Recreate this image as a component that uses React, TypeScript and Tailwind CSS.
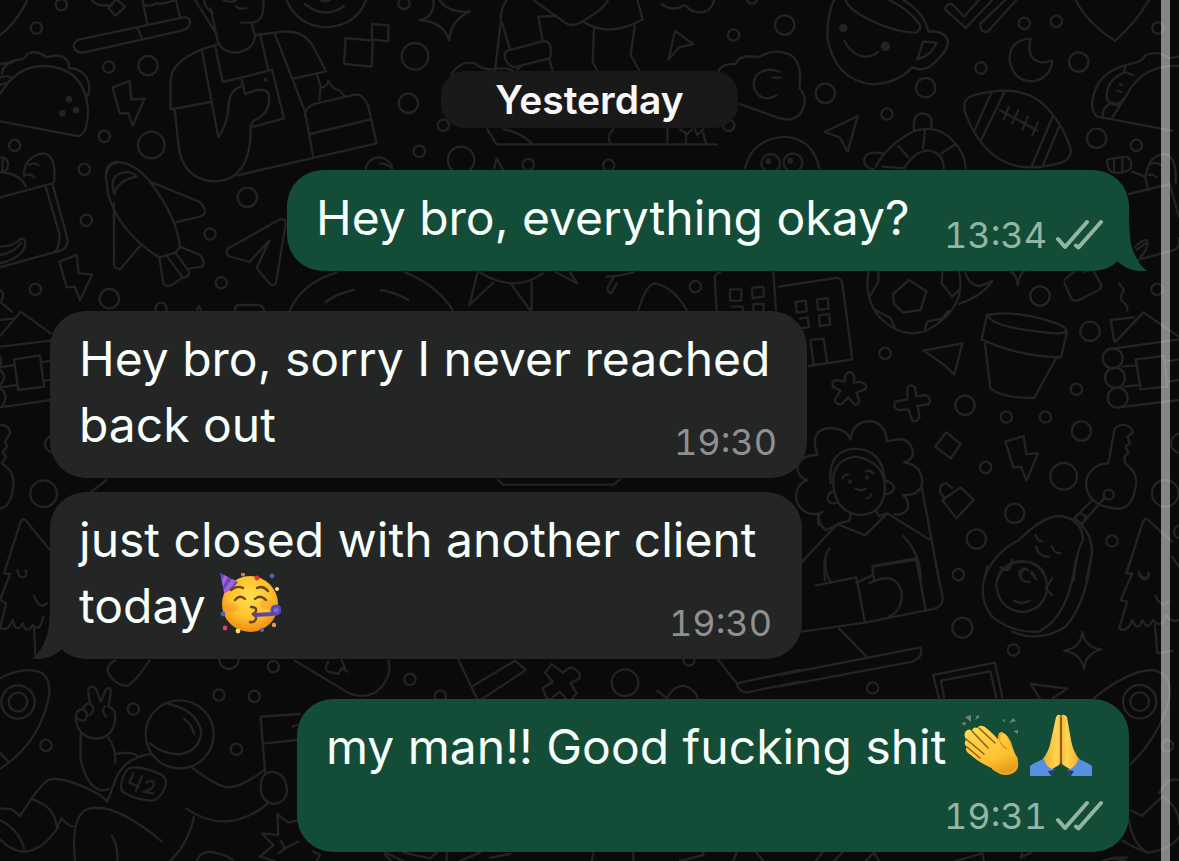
import type { ReactNode } from "react";
import { clsx } from "clsx";

type Dot = [x: number, y: number, r: number];

const circles: Dot[] = [
  [184, 14, 17], [109, 84, 17], [326, 201, 17], [444, 197, 29], [313, 409, 17],
  [44, 436, 17], [454, 435, 40], [253, 508, 17], [259, 661, 17], [742, 592, 29],
  [630, 702, 17], [664, 848, 17], [106, 868, 17], [328, 896, 29], [483, 925, 17],
  [1212, 10, 17], [1245, 169, 40], [1225, 310, 29], [1330, 376, 17], [1258, 454, 17],
  [1383, 480, 40], [1585, 494, 17], [1826, 496, 17], [2201, 105, 17], [2186, 376, 17],
  [2086, 860, 17], [2256, -6, 17], [2312, 490, 28], [2379, 488, 28], [1137, 512, 40],
  [2354, 75, 29], [3073, 70, 17], [3169, 64, 17], [3474, 84, 17], [2943, 204, 17],
  [3236, 186, 29], [2476, 280, 29], [2777, 263, 29], [2661, 342, 17], [3290, 415, 29],
  [3409, 436, 17], [3120, 888, 29], [3471, 868, 17],
  [2655, 1060, 17], [3270, 994, 29], [3229, 1168, 17], [2895, 1216, 29], [3019, 1251, 17],
  [3136, 1251, 17], [3244, 1293, 29], [2957, 1402, 17], [3191, 1429, 40], [3044, 1540, 29],
  [2929, 1617, 29], [3336, 1623, 17], [2875, 1724, 17], [3496, 1480, 40], [3542, 1330, 29],
  [3542, 1595, 20], [3338, 1075, 30], [3345, 1133, 30], [3353, 1193, 30],
  [2887, 1883, 30], [3040, 1950, 17], [2618, 2064, 17], [3419, 2105, 50], [3419, 2105, 28],
  [3502, 2237, 17], [54, 2106, 50], [54, 2106, 28], [400, 2127, 17], [657, 2085, 17],
  [763, 2089, 17], [138, 2236, 17], [709, 2248, 17], [820, 2000, 17], [687, 1978, 29],
  [1230, 2038, 17], [1321, 2088, 17], [1875, 2048, 40], [2067, 1980, 17],
  [131, 1481, 40], [160, 1332, 25], [3326, 1484, 15],
];

const dots: Dot[] = [
  [207, 298, 10], [187, 340, 10], [228, 331, 10], [797, 239, 6],
  [2530, 84, 13], [2656, 139, 14], [2305, 484, 9], [2370, 482, 9],
  [2550, 1445, 6], [2601, 1433, 6],
];

function Wallpaper() {
  return (
    <svg
      aria-hidden="true"
      viewBox="0 0 3537 2583"
      preserveAspectRatio="xMinYMin slice"
      className="absolute inset-0 size-full"
      fill="none"
      stroke="#232323"
      strokeWidth={7}
      strokeLinecap="round"
      strokeLinejoin="round"
    >
      {circles.map(([x, y, r]) => (
        <circle key={`${x}-${y}-${r}`} cx={x} cy={y} r={r} />
      ))}
      {dots.map(([x, y, r]) => (
        <circle key={`${x}-${y}`} cx={x} cy={y} r={r} fill="#232323" stroke="none" />
      ))}
      {/* top left: taco, bolts, barista, cake */}
      <g>
        <path d="M0 105 Q45 75 82 0" />
        <path d="M275 0 Q295 22 325 15 M348 -2 L376 20 L346 47 L326 25 Z" />
        <path d="M240 118 L550 52 Q572 50 570 70 Q566 86 545 92 L250 158 Q225 158 221 138 Q222 122 240 118 Z M412 84 L428 120 M428 0 L441 70 M436 15 Q455 20 470 10 Q490 14 528 0 L539 48" />
        <path d="M0 282 Q50 198 128 198 Q255 200 264 330 Q262 410 232 408 L0 364" />
        <path d="M5 220 Q10 190 50 180 Q75 180 82 162 Q110 148 140 172 Q180 158 200 180 Q210 195 206 204 M0 192 Q20 190 40 186 M0 232 Q20 225 32 232 M0 255 L20 248 M206 204 Q262 208 268 260 Q268 280 258 296" />
        <path d="M337 263 L389 243 L394 299 L434 295 L398 377 L385 339 L360 340 Z" />
        <path d="M178 785 L230 765 L236 820 L277 823 L240 901 L224 860 L200 862 Z" />
        <path d="M585 0 L648 100 M632 25 L652 120 Q665 158 710 158 Q760 150 765 110 L755 68 Q795 65 790 0 M612 0 Q615 25 638 38 M708 20 Q718 30 738 24 M722 68 H748 M670 0 Q695 10 710 0" />
        <path d="M652 133 L606 148 Q515 185 512 240 V328 L632 306 M606 152 L655 412 Q685 370 686 310 Q690 270 725 258 M646 140 L668 246 L724 233 L735 282 Q800 255 806 285 Q815 340 760 362 L752 378 Q755 540 645 544 Q545 540 535 430 L524 328" />
        <path d="M724 233 L816 209 L852 355 L760 380 M766 105 L850 95 Q910 90 940 140 L978 214 L880 236 M782 110 L804 205 M824 100 L915 335 L940 472 M712 526 L1130 430 L1105 320 Q1090 280 1065 284 L950 310 Q915 318 915 348 M930 402 L1112 358 M950 222 L962 258 L958 300 M962 262 Q982 262 985 242 Q995 265 1018 272 L1034 288" />
        <path d="M860 0 Q890 75 975 82 Q1070 78 1098 0 M915 12 Q975 60 1032 18 M962 0 Q975 8 990 0" />
        <path d="M1037 114 L1118 122 L1115 200 L1032 192 Z M1116 72 L1166 76 L1164 124 L1116 118 Z" />
      </g>
      {/* left: pocket, rocket plane, paper plane */}
      <g>
        <path d="M0 592 L157 550 L202 715 Q205 745 180 752 L0 802 M136 556 L178 700 Q180 740 165 755 M0 516 Q60 520 78 560 M72 530 Q70 470 130 460 Q170 465 162 545 M88 495 Q105 485 116 496 M78 525 Q90 520 103 532 M0 472 Q18 468 24 490 Q25 510 10 516 M8 475 V512 M0 740 Q40 740 60 718 Q78 712 76 735 Q65 775 0 790 M0 765 Q40 760 64 728" />
        <path d="M318 535 Q315 488 350 486 Q405 488 450 545 Q530 650 540 740 L526 758 L478 772 Q360 700 325 585 Z M320 520 Q325 490 350 490 M343 582 Q325 530 368 518 Q395 512 410 530 Q355 540 343 582 M450 545 L600 606 Q630 640 600 650 L522 668 M342 610 V795 Q345 808 362 806 L420 738 M478 772 L490 850 Q500 866 520 852 L548 832 L502 770 M526 758 L568 815 Q565 835 548 832 M540 740 L600 765 Q615 780 608 800 L568 806" />
        <path d="M685 745 L840 658 Q858 655 857 672 L828 850 Q820 860 810 852 L770 804 L808 722 L748 786 L685 768 Q675 758 685 745 Z" />
        <path d="M870 930 Q905 850 1010 817 M978 906 Q1010 880 1062 870 M1142 870 Q1180 875 1225 900 M705 930 Q705 915 720 915 H770 Q790 915 792 930 M590 930 L597 918 L602 930 M1215 817 Q1310 855 1358 930 M0 870 Q15 880 5 900 M0 905 Q20 920 35 935" />
        <path d="M0 960 L42 955 M0 1008 L62 935 L152 1000 M0 1040 L152 1022 M42 1078 L120 1066 L132 1160 L55 1170 Z M0 1102 L42 1095 M0 1162 L50 1155 M122 1088 L152 1082 M135 1142 L152 1140 M0 1222 L152 1200 M0 1070 Q8 1085 0 1100 M0 1110 Q25 1130 0 1155 M0 1165 Q30 1185 5 1220" />
        <path d="M0 1275 Q30 1275 30 1300 L15 1325 L22 1340 L8 1355 L18 1372 L5 1390 Q45 1415 40 1455 Q35 1520 0 1526" />
        <path d="M150 1650 L78 1562 Q70 1552 62 1565 L12 1720 L30 1722 L0 1800 L18 1810 L0 1885 Q25 1895 38 1860 Q50 1905 68 1870 Q80 1905 98 1875 Q120 1900 130 1850 M52 1710 Q58 1735 70 1732 Q82 1730 78 1712 M102 1788 Q120 1830 140 1810 M102 1885 L106 1965 M270 1478 L320 1440" />
      </g>
      {/* top centre: sparkle, person at desk, clouds */}
      <g transform="translate(1140 0)">
        <path d="M120 60 Q165 50 160 0 M178 0 Q205 40 270 34 Q210 62 208 122 Q190 65 120 60" />
        <path d="M380 0 Q360 25 362 70 L345 210 M366 66 L390 150 M382 152 L488 124 Q508 122 512 142 Q515 172 505 176 L400 202 Q375 190 374 165 Q374 155 382 152 Z M488 124 L475 50 L530 48 M412 208 L422 200 M508 178 L517 212" />
        <path d="M460 0 L555 68 Q575 82 600 68 Q670 30 684 0 M610 65 Q690 115 788 58 L772 0 M642 84 L638 185 L652 212 M764 78 L752 165 L778 212" />
        <path d="M215 222 Q240 180 285 190 Q305 210 340 208 Q385 200 402 215 M322 388 L350 433 H1010 M370 388 Q420 395 455 430 M700 388 Q680 405 690 430 M862 385 V430 M918 400 V430 M900 388 L922 402 L936 388 M945 388 L952 405 L970 388 M970 400 L978 430 M342 505 L350 475 L368 508" />
        <path d="M845 12 Q870 32 900 22 L915 15 Q945 50 985 30 Q1000 15 1002 0 M885 93 L940 132 L898 142 L866 178 Z" />
        <path d="M1015 215 Q1025 190 1066 192 Q1080 160 1135 172 Q1180 145 1220 160 Q1270 175 1258 265 Q1290 300 1258 345 Q1230 365 1205 355 M1080 312 L1200 356 M1197 215 Q1160 200 1130 225 Q1110 255 1135 285 Q1160 305 1190 285 M1178 233 H1202" />
        <path d="M1095 505 Q1115 415 1218 410 Q1300 420 1318 505 M0 490 Q20 490 35 505" />
        <path d="M293 817 L268 915 L340 848 M300 817 Q350 850 405 850 Q450 848 488 820 M392 850 L450 930 M455 845 V930 M528 817 L592 850 L570 817 M680 830 Q705 830 760 817 M700 832 L682 865 Q682 880 695 878 L710 850 M775 930 Q800 850 825 850 Q880 860 920 930 M1010 930 L1004 830 Q1008 820 1020 817 M1180 817 L1188 930 M1050 868 H1084 V902 H1050 Z M1116 864 L1150 860 L1152 890 L1118 894 Z M1056 920 H1088 V950 M1120 930 V912 H1150 V940" />
      </g>
      {/* top right: mug, ticks, moon, football, ring */}
      <g transform="translate(2337 0)">
        <path d="M165 0 Q145 40 145 110 Q165 240 280 253 Q355 250 400 202 M400 202 Q440 220 475 180 Q525 130 495 105 Q480 92 448 95 Q435 35 372 0 M200 0 Q205 20 245 45 Q340 98 412 98 Q430 85 420 70 Q385 25 330 0 M196 122 Q220 168 260 170 Q285 168 297 155 M432 125 L472 128 Q460 165 415 178 Z" />
        <path d="M498 28 Q505 5 522 15 L555 50 L600 0 M498 28 L560 84 L640 0 M700 -20 L605 70 Q600 95 625 96 L712 0 M890 0 Q925 70 1008 122 Q1070 70 1110 0" />
        <path d="M755 116 Q690 120 692 180 Q700 242 760 244 Q815 235 820 182 Q780 195 762 175 Q745 155 755 116 Z" />
        <path d="M556 310 Q565 288 590 284 Q720 250 790 310 Q850 365 876 450 Q875 485 830 492 Q720 520 650 470 Q585 420 556 330 Z M636 280 L588 388 M675 278 L604 425 M822 348 L758 498 M840 380 L792 496 M662 330 L776 392 M690 320 L674 358 M718 330 L700 370 M746 350 L730 390 M776 368 L760 405" />
        <path d="M137 396 L236 348 L206 455 L182 412 Z M405 390 Q400 340 432 340 Q465 345 456 382 M290 500 Q320 440 400 395 Q470 370 520 420 Q560 460 560 508 M375 505 Q410 450 450 452 Q495 460 494 508 M438 388 L432 445 M358 438 L388 472 M530 432 L488 460 M310 500 L375 505 M310 460 Q255 450 255 485 Q260 505 285 508" />
        <path d="M1179 392 L955 350 Q930 330 945 280 Q965 210 1060 190 Q1090 185 1100 165 Q1140 150 1170 175 L1200 170 M1200 198 Q1090 190 1040 290 L1000 352 M1040 195 L1035 215 L1062 225 M1040 290 Q1010 330 985 300 Q975 245 1035 218 M972 348 Q965 325 1000 308 L1020 318 M1022 252 L1030 256 M1015 272 L1028 276" />
        <path d="M985 490 Q980 475 1000 475 L1045 470 Q1060 480 1055 505 Q1040 520 1005 518 Q988 515 985 490 Z M1005 478 V515 M1030 474 V512 M1060 515 L1098 530 L1108 570 M1050 582 L1172 552 L1200 650 M1100 530 Q1110 462 1160 462 Q1195 475 1190 550 M1118 492 Q1130 485 1145 495 M1110 525 Q1120 520 1132 532 M1055 785 L1180 752 Q1205 745 1200 715 M1068 740 Q1105 710 1105 725 Q1108 745 1085 770 M1072 750 L1100 730" />
      </g>
      {/* right: building, ball, plant pot, woman, key */}
      <g transform="translate(2337 810)">
        <path d="M0 50 L170 24 Q188 22 190 42 L220 268 L90 288 M50 96 L80 92 L83 124 L53 128 Z M114 88 L146 84 L149 116 L117 120 Z M120 136 L150 132 L154 164 L122 168 Z M62 146 L86 142 L90 172 L70 174 M94 210 L134 206 L145 280 L104 285 Z" />
        <path d="M268 6 Q255 95 310 150 Q400 230 490 150 Q560 90 540 6 M298 6 V35 L275 75 M490 6 L488 40 L520 80 L540 60 M342 72 L390 30 L442 64 L425 120 L372 128 L345 100 Z M290 120 L335 145 L348 175 M435 185 L445 155 L490 145 L508 122 M558 6 Q570 45 600 48 Q620 45 640 32 Q615 75 540 102 M695 6 Q712 10 716 46 Q722 10 735 4" />
        <path d="M856 30 L872 15 L885 6 M856 40 L878 88 Q885 95 900 90 L960 60 Q970 50 965 40 L945 6 M915 6 L930 0 M1020 40 L1035 60 Q1020 80 1030 95 Q1048 105 1045 122" />
        <path d="M624 135 Q700 120 800 150 Q860 165 864 185 Q840 195 780 185 Q640 170 624 135 L608 208 Q720 260 846 262 L864 185 M618 220 L634 355 Q670 385 765 384 L832 264 M434 242 L550 220 L526 314 L500 288 Z" />
        <path d="M1010 215 L1093 127 L1200 200 M995 150 L1065 142 M995 150 L1006 215 M995 237 L1200 208 M1070 268 L1155 258 L1165 350 L1085 358 Z M1030 290 L1072 286 M1035 350 L1085 345 M1160 275 L1200 268 M1165 335 L1200 330 M1020 412 L1200 390" />
        <path d="M198 335 V318 Q212 295 226 318 L224 338 L245 336 Q270 345 258 358 L232 368 L240 390 Q240 408 225 402 L208 382 L188 402 Q168 405 168 388 L185 362 L162 350 Q155 332 172 330 Z" />
        <path d="M385 352 Q395 340 408 352 L412 380 L440 375 Q458 385 450 402 L415 408 L422 440 Q415 458 400 452 L388 418 L358 420 Q340 412 348 395 L385 388 Z" />
        <path d="M502 487 L545 522 L515 565 L468 530 Z M679 515 L734 498 L742 552 L777 550 L742 632 L726 590 L703 592 Z M490 690 L545 652 L584 690 L532 745 Z M484 668 Q480 640 502 640 L520 655 M484 668 L498 685" />
        <path d="M115 555 Q90 480 150 474 Q200 475 215 508 Q220 455 275 453 Q320 460 324 515 Q395 490 402 550 Q400 570 375 577 Q430 585 430 640 Q420 680 372 675 Q390 690 387 715 Q370 740 345 732 M115 555 Q60 555 55 595 Q60 625 85 630 Q45 645 53 695 Q75 740 118 730 Q115 760 140 780 L165 770 M130 725 Q110 740 120 765" />
        <path d="M155 640 Q145 540 230 536 Q315 540 318 640 M165 660 Q150 570 230 560 Q320 575 318 660 Q310 735 240 735 Q175 725 165 660 M160 665 Q145 670 146 688 Q155 705 175 698 M322 632 Q345 640 345 655 Q340 672 322 672 M190 625 Q195 612 208 614 M262 604 Q275 598 284 612 M230 656 Q245 665 260 656 M262 685 Q275 685 276 672" />
        <path d="M215 730 L212 752 L175 762 L70 875 M290 722 L300 738 L325 730 L450 808 M175 762 L258 796 L325 730 M428 650 L480 930 M372 798 Q425 850 425 930 M152 835 Q130 860 138 930 M280 888 L410 865 M280 888 L285 930" />
        <path d="M988 580 L1006 480 Q1015 462 1040 465 Q1065 475 1060 490 L1045 500 L1053 520 L1040 530 L1048 550 L1036 560 L1038 580 Q1080 610 1070 650 Q1060 720 1010 716 Q970 710 955 700 Q910 670 925 620 Q945 580 988 580 M978 682 L910 760 M940 690 L885 745 M885 745 L910 762 L922 740 L905 730" />
        <path d="M615 930 Q640 850 720 810 Q790 740 840 738 Q910 745 912 810 Q890 850 885 930 M905 762 Q950 810 935 870 L922 930 M770 795 Q772 810 790 815 M772 830 Q775 860 810 860 M818 828 Q825 850 845 850 M655 930 Q680 865 740 875 Q790 880 802 930 M670 895 Q685 905 700 870 M725 925 Q725 895 745 898 M757 905 L768 918" />
        <path d="M1179 815 L1105 748 Q1098 742 1092 755 L1042 910 L1060 912 M1078 905 Q1085 930 1100 928 Q1110 920 1108 908 M1179 860 L1200 890" />
      </g>
      {/* bottom right: desk, avocado, tree, rocket */}
      <g transform="translate(2337 1680)">
        <path d="M138 0 Q140 50 158 68 M110 76 L232 52 L258 188 L68 215 M232 68 L282 45 V20 L405 0 M270 70 Q350 30 368 95 Q372 150 330 170 M258 188 L470 145 Q495 135 490 105 L468 0 M412 0 L440 150 M180 205 L265 292 M0 345 L425 262 Q435 290 400 305 L0 380" />
        <path d="M615 60 Q600 120 640 170 Q700 220 780 215 Q870 170 890 0 M615 60 L625 20 M700 215 Q780 250 860 200 Q920 130 935 0 M728 5 Q655 10 652 80 Q665 155 735 156 Q800 145 805 80 Q795 5 728 5 M720 35 Q725 70 752 65 M757 40 L772 58 M705 122 Q730 135 752 122 M665 22 Q690 45 700 5 M820 55 L800 85 L820 105 M725 30 Q740 20 748 32" />
        <path d="M855 272 Q905 265 910 216 Q920 265 968 268 Q920 280 915 326 Q905 280 855 272 Z M755 372 L865 386 L822 414 M755 372 L782 414 M480 414 L462 345 L648 308 L670 412 M495 412 L486 362 L634 334 L652 412" />
        <path d="M1055 0 L1042 38 L1060 40 L1025 120 L1045 125 L1020 205 Q1045 220 1060 180 Q1075 220 1090 180 Q1105 215 1122 180 Q1150 210 1160 165 Q1180 190 1200 180 M1080 38 Q1090 62 1108 50 L1110 38 M1130 108 Q1145 145 1170 125 M1128 195 L1135 280 L1180 272" />
        <path d="M945 414 Q1050 330 1120 330 Q1185 340 1170 420 Q1140 530 1055 612 M1055 750 L1088 768 L1150 710 Q1200 740 1200 790 M1200 660 Q1165 650 1140 700 M1030 842 Q1090 875 1110 878 Q1180 865 1200 830 M1050 780 Q1060 850 1105 878 M730 880 L725 893 L755 878 M1000 893 L1045 893" />
        <path d="M110 903 L130 878 M165 903 L190 878 M260 903 L285 878 L300 903 M530 903 L610 880 L615 903 M970 903 L1000 895 L1040 903" />
      </g>
      {/* bottom left: astronaut */}
      <g transform="translate(0 1800)">
        <path d="M0 235 Q65 200 115 215 Q150 225 148 285 Q120 430 0 506 M0 458 L25 485 M322 210 Q325 190 345 182 M322 210 Q335 250 378 258 Q400 255 448 182 M885 182 L1040 275 Q1085 300 1130 275 Q1180 230 1165 182 M985 185 Q970 205 985 215 L1015 222 L1025 205 L1042 215 M1025 182 L1035 205" />
        <path d="M270 310 L264 270 Q275 250 290 270 L302 305 L318 268 Q335 255 332 280 L325 320 Q350 325 345 365 Q335 415 285 416 Q235 410 228 360 Q225 325 250 328 Q270 340 255 360 Q240 365 232 355 M250 325 Q260 300 278 318 Q285 335 268 345 M315 320 Q302 330 318 350" />
        <path d="M242 402 V480 Q260 560 305 572 L325 568 M325 412 Q350 450 345 488 M345 462 L380 458 Q405 460 410 466 M455 462 Q380 470 350 530 L322 605 M322 605 L300 585 Q200 530 150 538 Q125 545 62 645 M98 598 Q165 620 170 680 L185 655 Q205 680 225 680 M175 680 Q130 750 75 755 M62 648 L35 628 L0 625 M0 660 Q60 690 75 755 Q35 755 0 718" />
        <circle cx={539} cy={403} r={102} />
        <path d="M450 430 Q490 465 545 462 Q600 450 604 395 Q590 330 505 312 M552 355 Q580 380 582 402 M578 504 Q650 560 685 562 Q730 560 795 508 M782 350 L795 515 M782 350 L900 342 M795 430 L890 420 M782 565 Q780 520 815 515 Q860 520 861 575 Q855 610 820 612 Q785 605 782 565 M802 612 Q680 710 558 625 M582 650 Q565 730 510 783 M225 783 Q210 640 270 625 Q350 610 485 724 M335 705 Q355 740 352 783 M878 380 L890 375" />
        <path d="M395 503 Q430 500 475 520 Q505 530 496 560 Q480 600 455 602 Q410 600 375 580 Q355 570 368 535 Q378 505 395 503 Z" />
        <path d="M400 520 L388 548 L415 560 M426 528 L408 572 M438 548 Q462 535 462 555 Q455 570 430 575 L460 580" />
        <path d="M785 700 L835 705 L832 642 L865 668 L888 662 M785 700 L820 735 L780 770 L825 783 M842 722 L855 745 L895 725 M855 745 L835 760 M590 783 Q600 755 630 755 Q685 765 700 783 M940 755 L960 765 L950 783 M1155 765 L1175 783" />
      </g>
      {/* strips that show between the bubbles */}
      <g transform="translate(1200 1920)">
        <path d="M175 60 L232 178 M215 140 L345 62 L378 90 L245 178 M435 98 L455 72 L488 98 L510 82 Q545 90 538 115 L512 130 L530 160 L515 178 M435 98 L458 125 L428 145 L440 175 L458 178 M460 170 L480 155 L500 178 M772 152 L800 175 Q820 138 850 137 Q885 145 895 178 M955 60 L1010 130 Q1015 155 1040 157 L1200 125 M1010 130 L1200 90" />
        <path d="M295 -480 L310 -466 H640 L660 -482" />
      </g>
      <g transform="translate(1140 1770)">
        <path d="M15 788 L70 813 M70 788 L150 805 L170 788 M200 788 V813 M240 813 L300 788 M330 803 L390 792 M640 790 L635 813 M760 788 V813 M900 813 L970 795 V786 M1060 813 L1070 788 M1130 788 L1150 813" />
      </g>
    </svg>
  );
}

function PartyFace() {
  return (
    <svg
      role="img"
      aria-label="Partying face"
      viewBox="0 0 62 62"
      className="inline-block size-[62px] align-[-12px]"
    >
      <defs>
        <radialGradient id="face" cx="0.5" cy="0.38" r="0.62">
          <stop offset="0" stopColor="#ffe04d" />
          <stop offset="0.6" stopColor="#fdc12b" />
          <stop offset="1" stopColor="#ed8c12" />
        </radialGradient>
      </defs>
      <circle cx="31" cy="31" r="28" fill="url(#face)" />
      <ellipse cx="12" cy="35" rx="7" ry="5" fill="#f98b2c" opacity="0.4" />
      <ellipse cx="48" cy="31" rx="7" ry="5" fill="#f98b2c" opacity="0.35" />
      <path d="M1 0 L19 9 Q15 16 5 20 Z" fill="#5b51c4" />
      <path d="M5 2 L3 8 L4 13 L9 4 Z M13 6 L5 17 L5 20 L9 18 L17 8 Z" fill="#b25fd6" />
      <g fill="none" stroke="#6d4312" strokeWidth="2.4" strokeLinecap="round">
        <path d="M12 17 Q18 12 24 15 M38 15 Q44 12 49 18" />
        <path d="M16 27 Q21 21 26 26 M36 26 Q41 21 47 27" />
        <path d="M32 34 Q38 34 37 38 Q36 41 33 41 Q38 42 37 46 Q35 50 31 49" />
      </g>
      <path d="M36 42 L54 41" stroke="#5b45ac" strokeWidth="4" strokeLinecap="round" />
      <circle cx="57" cy="37" r="4" fill="#7f6fb0" stroke="#5b45c0" strokeWidth="3" />
      <circle cx="38" cy="5" r="2.4" fill="#d93844" />
      <circle cx="24" cy="1.5" r="2" fill="#c98555" />
      <circle cx="53" cy="3" r="2.4" fill="#3f62b5" />
      <circle cx="58" cy="16" r="2" fill="#ffe46a" />
      <circle cx="4" cy="41" r="2.4" fill="#4169b0" />
      <circle cx="6" cy="55" r="2.4" fill="#d9416b" />
      <circle cx="19" cy="58" r="2.4" fill="#ffdc5e" />
      <circle cx="43" cy="57" r="2" fill="#5967b4" />
      <circle cx="55" cy="52" r="2.2" fill="#e39a72" />
    </svg>
  );
}

function ClappingHands() {
  return (
    <svg
      role="img"
      aria-label="Clapping hands"
      viewBox="0 0 62 62"
      className="mr-2 inline-block size-[62px] align-[-12px]"
    >
      <defs>
        <linearGradient id="clap" x1="0.2" y1="0" x2="0.7" y2="1">
          <stop offset="0" stopColor="#ffd94f" />
          <stop offset="0.7" stopColor="#fdc132" />
          <stop offset="1" stopColor="#e79a1b" />
        </linearGradient>
      </defs>
      <g fill="#71807b">
        <path d="M1 9 L6 8 L5 12 Z M5 3 L11 1 L11 8 Z M15 6 L17 1 L20 3 Z M42 6 L44 5 L46 9 Z M49 9 L53 4 L56 7 Z M53 17 L58 16 L58 20 Z" />
      </g>
      <path
        d="M38 24 Q38 17 42 18 Q47 20 51 28 Q54 38 57 44 Q60 52 56 57 Q49 63 40 60 L33 56 Q30 53 35 52 Z"
        fill="#f0ac25"
      />
      <path
        d="M6 17 Q9 14 12 17 Q13 12 17 14 Q20 10 25 13 Q35 21 40 28 L41 20 Q45 18 48 25 Q51 35 57 43 Q60 50 54 56 Q46 62 38 57 Q26 52 17 46 L7 38 Q5 35 7 33 Q3 30 6 26 Q3 20 6 17 Z"
        fill="url(#clap)"
      />
      <path
        d="M12 17 L28 34 M19 14 L35 29 M6 25 L24 40 M7 33 L20 44"
        fill="none"
        stroke="#985c14"
        strokeWidth="1.6"
        strokeLinecap="round"
      />
      <path d="M40 28 Q43 33 47 35" fill="none" stroke="#cf8918" strokeWidth="1.2" />
    </svg>
  );
}

function FoldedHands() {
  return (
    <svg
      role="img"
      aria-label="Folded hands"
      viewBox="0 0 62 62"
      className="inline-block size-[62px] align-[-12px]"
    >
      <defs>
        <linearGradient id="pray" x1="0" x2="1">
          <stop offset="0" stopColor="#f1ab24" />
          <stop offset="0.4" stopColor="#ffd653" />
          <stop offset="0.5" stopColor="#f5b333" />
          <stop offset="0.65" stopColor="#ffd653" />
          <stop offset="1" stopColor="#f1ab24" />
        </linearGradient>
      </defs>
      <path
        d="M26 3 Q28 -1 31 2 Q34 -1 37 3 L41 26 Q43 38 50 46 L43 57 L33 51 L31 48 L29 51 L19 57 L12 46 Q19 38 21 26 Z"
        fill="url(#pray)"
      />
      <path d="M31 3 V50" stroke="#7b430a" strokeWidth="1.6" strokeLinecap="round" />
      <path d="M14 45 Q5 48 0 52 V62 H21 L25 56 Q16 54 14 45 Z" fill="#5790e1" />
      <path d="M48 45 Q57 48 62 52 V62 H41 L37 56 Q46 54 48 45 Z" fill="#5790e1" />
      <path d="M25 56 L21 62 L18 57 Z M37 56 L41 62 L44 57 Z" fill="#173d7a" />
    </svg>
  );
}

function ReadTicks() {
  return (
    <svg
      role="img"
      aria-label="Delivered"
      viewBox="0 0 48 32"
      className="h-8 w-12"
      fill="none"
      stroke="currentColor"
      strokeWidth={4}
      strokeLinecap="round"
      strokeLinejoin="round"
    >
      <path d="M3 20 L10 28 L32 3 M21 26.5 L23.5 28.5 L46 3" />
    </svg>
  );
}

function Tail({ side }: { side: "left" | "right" }) {
  return (
    <svg
      aria-hidden="true"
      viewBox="0 0 60 60"
      className={clsx(
        "absolute bottom-0 size-[60px]",
        side === "right" ? "right-[-20px] text-[#144d37]" : "left-[-20px] -scale-x-100 text-[#242626]",
      )}
      fill="currentColor"
    >
      <path d="M40 0 C40 22 41 34 46 44 C49 51 53 56 58 60 C46 61 38 58 30 52 L20 40 V0 Z" />
    </svg>
  );
}

function Bubble({
  children,
  time,
  sent = false,
  tail = false,
  stacked = false,
  className,
}: {
  children: ReactNode;
  time: string;
  sent?: boolean;
  tail?: boolean;
  stacked?: boolean;
  className?: string;
}) {
  return (
    <article
      className={clsx(
        "relative grid rounded-[36px] pt-[15px] pb-4 pl-[29px]",
        sent ? "self-end bg-[#144d37] pr-[26px]" : "self-start bg-[#242626] pr-[30px]",
        className,
      )}
    >
      {tail && <Tail side={sent ? "right" : "left"} />}
      <p className="relative col-start-1 row-start-1 pb-1 text-[48px] leading-[66px] text-[#f7fffb]">
        {children}
      </p>
      <div
        className={clsx(
          "relative col-start-1 flex items-center gap-2 self-end justify-self-end text-[36px] leading-10 tabular-nums",
          stacked ? "row-start-2 mt-3" : "row-start-1",
          sent ? "text-[#93b5a6]" : "text-[#8f9191]",
        )}
      >
        <time>{time}</time>
        {sent && <ReadTicks />}
      </div>
    </article>
  );
}

export default function App() {
  return (
    <div className="relative flex min-h-screen overflow-hidden bg-[#0a0a0a] font-['Inter','Liberation_Sans',sans-serif]">
      <Wallpaper />
      <main className="relative flex flex-1 flex-col pt-[71px] pr-8 pb-[9px] pl-[50px]">
        <h2 className="self-center rounded-[24px] bg-[#191919] px-[54px] text-[39px] leading-[57px] font-semibold text-[#f7f7f7]">
          Yesterday
        </h2>
        <div className="mt-[42px] flex flex-col">
          <Bubble time="13:34" sent tail className="w-[842px] max-w-full">
            Hey bro, everything okay?
          </Bubble>
          <Bubble time="19:30" className="mt-10 w-[757px] max-w-full">
            Hey bro, sorry I never reached back out
          </Bubble>
          <Bubble time="19:30" tail className="mt-3.5 w-[752px] max-w-full">
            just closed with another client today <PartyFace />
          </Bubble>
          <Bubble time="19:31" sent stacked className="mt-10 w-[832px] max-w-full">
            my man!! Good fucking shit <ClappingHands />
            <FoldedHands />
          </Bubble>
        </div>
      </main>
      <div className="relative mr-[9px] w-[9px] bg-white/50" />
    </div>
  );
}
